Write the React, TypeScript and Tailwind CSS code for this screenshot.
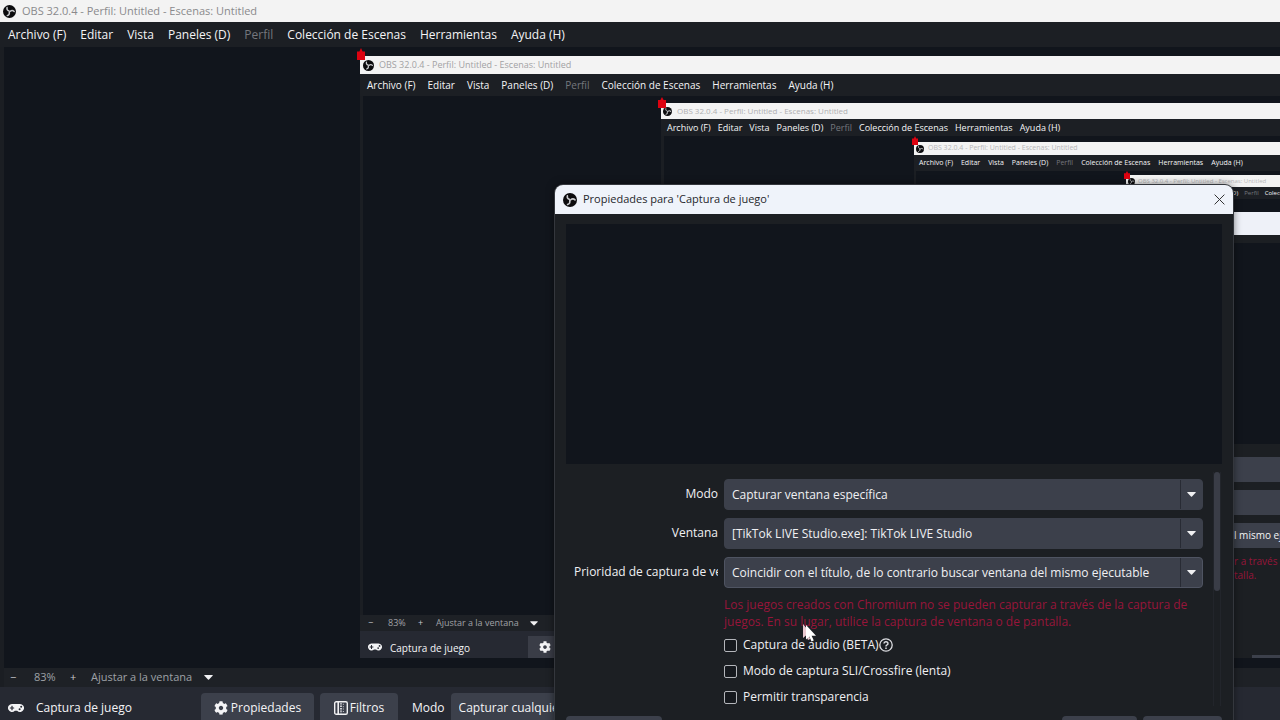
import React from 'react';
import { FaGamepad, FaCog } from 'react-icons/fa';

interface MirrorLevel {
  frame: string;
  titleBar: string;
  logo: string;
  titleText: string;
  menu: string;
  canvas: string;
  handle: string;
}

const menuItems = [
  'Archivo (F)',
  'Editar',
  'Vista',
  'Paneles (D)',
  'Perfil',
  'Colección de Escenas',
  'Herramientas',
  'Ayuda (H)'
];

const windowTitle = 'OBS 32.0.4 - Perfil: Untitled - Escenas: Untitled';

// Each level is the same window, captured again inside the previous one
const mirrorLevels: MirrorLevel[] = [
  {
    frame: 'left-[356px] top-[9px] bottom-[10px]',
    titleBar: 'h-[18px] gap-[5px] pl-[3px]',
    logo: 'size-[11px]',
    titleText: 'text-[9px] text-[#a2a2a4]',
    menu: 'h-[22px] pl-[7px] gap-3 text-[10px]',
    canvas: 'ml-[3px]',
    handle: 'h-3 w-2 -left-[3px] -top-2'
  },
  {
    frame: 'left-[298px] top-[7px] bottom-0',
    titleBar: 'h-[16px] gap-[5px] pl-[2px]',
    logo: 'size-[9px]',
    titleText: 'text-[8px] text-[#b0b0b2]',
    menu: 'h-[17px] pl-[6px] gap-[7px] text-[9px]',
    canvas: 'ml-[3px]',
    handle: 'h-[11px] w-2 -left-[3px] -top-1.5'
  },
  {
    frame: 'left-[250px] top-[6px] bottom-0',
    titleBar: 'h-[13px] gap-1 pl-[2px]',
    logo: 'size-[8px]',
    titleText: 'text-[7px] text-[#b8b8ba]',
    menu: 'h-[16px] pl-[5px] gap-2 text-[7px]',
    canvas: 'ml-[2px]',
    handle: 'h-[9px] w-1.5 -left-[2px] -top-1.5'
  },
  {
    frame: 'left-[210px] top-[4px] bottom-0',
    titleBar: 'h-[12px] gap-[3px] pl-[2px]',
    logo: 'size-[7px]',
    titleText: 'text-[6px] text-[#b8b8ba]',
    menu: 'h-[12px] pl-[4px] gap-[6px] text-[6px]',
    canvas: 'ml-[2px]',
    handle: 'h-2 w-1.5 -left-[2px] -top-1'
  }
];

const ObsLogo: React.FC<{ className: string }> = ({ className }) => (
  <svg viewBox="0 0 24 24" className={`shrink-0 ${className}`}>
    <circle cx="12" cy="12" r="12" fill="#0c0c0e" />
    <g fill="none" stroke="#c9cacd" strokeWidth="2.6" strokeLinecap="round">
      <path d="M11.500 11.300C8.200 10.200 6.700 7.600 7.500 4.600" />
      <path d="M11.500 11.300C8.200 10.200 6.700 7.600 7.500 4.600" transform="rotate(120 12 12)" />
      <path d="M11.500 11.300C8.200 10.200 6.700 7.600 7.500 4.600" transform="rotate(240 12 12)" />
    </g>
  </svg>
);

const MenuBar: React.FC<{ className: string }> = ({ className }) => (
  <nav className={`flex shrink-0 items-center whitespace-nowrap bg-[#1c1f24] text-[#f4f4f6] ${className}`}>
    {menuItems.map((item) => (
      <button key={item} disabled={item === 'Perfil'} className="disabled:text-[#75777d]">
        {item}
      </button>
    ))}
  </nav>
);

const CaretDown: React.FC<{ className: string }> = ({ className }) => (
  <svg viewBox="0 0 9 5" className={className} fill="#f1f1f3">
    <path d="M.6 0h7.8q.6.2.2.8L5 4.6q-.5.5-1 0L.4.8Q0 .2.6 0z" />
  </svg>
);

const SourceHandle: React.FC<{ className: string }> = ({ className }) => (
  <svg viewBox="0 0 8 12" className={`absolute z-10 ${className}`} preserveAspectRatio="none">
    <path d="M4 0l1.600 3.400H8V12H0V3.400h2.400z" fill="#dc0210" />
  </svg>
);

const FilterIcon: React.FC = () => (
  <svg viewBox="0 0 14 14" className="size-3.5" fill="none" stroke="#f1f1f3">
    <rect x=".7" y=".7" width="12.6" height="12.6" rx="1.6" strokeWidth="1.4" />
    <path d="M4.2 1v12" strokeWidth="1.6" />
    <path d="M7 2.2v10" strokeWidth="1.6" strokeDasharray="1.4 1" />
    <path d="M9.4 2.8v9" strokeWidth="1.2" strokeDasharray="1 1.4" opacity=".7" />
  </svg>
);

const MirrorWindow: React.FC<{ depth: number }> = ({ depth }) => {
  const level = mirrorLevels[depth];
  if (!level) return null;

  return (
    <section className={`absolute right-0 flex flex-col bg-[#1b1e23] ${level.frame}`}>
      <SourceHandle className={level.handle} />
      <div className={`flex shrink-0 items-center whitespace-nowrap bg-[#f3f3f3] ${level.titleBar}`}>
        <ObsLogo className={level.logo} />
        <span className={level.titleText}>{windowTitle}</span>
      </div>
      <MenuBar className={level.menu} />
      <div className={`relative min-h-0 flex-1 overflow-clip bg-[#11151c] ${level.canvas} [overflow-clip-margin:10px]`}>
        <MirrorWindow depth={depth + 1} />
      </div>
      {depth === 0 && (
        <>
          <div className="flex h-4 shrink-0 items-center bg-[#1e2126] pl-2 text-[9px] text-[#a0a2a7]">
            <span className="w-5 text-[#c8c9cd]">−</span>
            <span className="w-[30px]">83%</span>
            <span className="w-[18px] text-[#c8c9cd]">+</span>
            <span className="w-[94px]">Ajustar a la ventana</span>
            <CaretDown className="h-[5px] w-2" />
          </div>
          <div className="flex h-[27px] shrink-0 items-end bg-[#262932] text-[10px] text-[#f4f4f6]">
            <FaGamepad className="mx-2 mb-1 size-3.5 shrink-0" />
            <span className="w-[138px] pb-0.5">Captura de juego</span>
            <button className="flex h-[22px] w-24 items-center bg-[#3a3d47] pl-[11px]">
              <FaCog className="size-3" />
            </button>
          </div>
        </>
      )}
    </section>
  );
};

// Right edge of the captured dialog, the rest stays behind the real one
const MirrorDialog: React.FC = () => (
  <div className="absolute bottom-[10px] left-[1228px] right-0 top-[165px] flex flex-col overflow-hidden whitespace-nowrap bg-[#1c1f23] text-[10px]">
    <div className="h-[23px] shrink-0 bg-[#eef1f8]" />
    <div className="mt-2 h-[201px] shrink-0 bg-[#11151c]" />
    <div className="mt-[13px] flex shrink-0 flex-col gap-2 text-[#f4f4f6]">
      <div className="h-[25px] bg-[#3c404b]" />
      <div className="h-[25px] bg-[#3c404b]" />
      <div className="flex h-[25px] items-center bg-[#3c404b] pl-0.5">l mismo ejecutable</div>
    </div>
    <p className="mt-1.5 shrink-0 pl-0.5 leading-[14px] text-[#97153a]">
      r a través de la captura
      <br />
      talla.
    </p>
    <div className="ml-5 mt-auto h-[3px] shrink-0 bg-[#3c404b]" />
  </div>
);

const ComboBox: React.FC<{ id: string; label: string; value: string; focused?: boolean }> = ({
  id,
  label,
  value,
  focused
}) => (
  <div className="flex items-center gap-1.5">
    <label htmlFor={id} className="w-36 shrink-0 overflow-hidden whitespace-nowrap pb-0.5 text-right">
      {label}
    </label>
    <div
      className={`relative flex h-[31px] flex-1 items-center rounded border bg-[#3c404b] ${
        focused ? 'border-[#4f5462]' : 'border-[#3c404b]'
      }`}
    >
      <select id={id} className="h-full w-full appearance-none rounded bg-transparent pl-[7px] pr-7 outline-none">
        <option>{value}</option>
      </select>
      <span className="pointer-events-none absolute inset-y-0 right-0 flex w-[22px] items-center justify-center border-l border-[#282b34]">
        <CaretDown className="h-[5px] w-[9px]" />
      </span>
    </div>
  </div>
);

const CheckRow: React.FC<{ label: string; children?: React.ReactNode }> = ({ label, children }) => (
  <label className="flex h-[26px] items-center">
    <input
      type="checkbox"
      className="mr-1.5 size-[13px] appearance-none rounded-[2px] border border-[#b4b6bb] bg-[#16191e]"
    />
    {label}
    {children}
  </label>
);

const PropertiesDialog: React.FC = () => (
  <div
    role="dialog"
    aria-labelledby="titulo-propiedades"
    className="absolute left-[555px] top-[185px] flex w-[678px] flex-col rounded-t-lg bg-[#1c1f23] text-[12px] text-[#f0f0f3] shadow-[0_0_8px_rgba(0,0,0,0.6)] ring-1 ring-[#34373d]"
  >
    <header className="flex h-[29px] items-center rounded-t-lg bg-[#eff3fa] px-2">
      <ObsLogo className="size-3.5" />
      <h2 id="titulo-propiedades" className="ml-1.5 flex-1 text-[11px] text-[#26272b]">
        Propiedades para 'Captura de juego'
      </h2>
      <button aria-label="Cerrar" className="text-[#333]">
        <svg viewBox="0 0 11 11" className="size-[11px]" stroke="currentColor" fill="none">
          <path d="M.6.6l9.8 9.8M10.4.6L.6 10.4" />
        </svg>
      </button>
    </header>

    <div className="mx-[11px] mt-2.5 h-60 bg-[#11151c]" />

    <div className="mx-[11px] flex h-[242px] pt-2">
      <form className="flex flex-1 flex-col gap-2 pl-2 pt-[7px]">
        <ComboBox id="modo" label="Modo" value="Capturar ventana específica" />
        <ComboBox id="ventana" label="Ventana" value="[TikTok LIVE Studio.exe]: TikTok LIVE Studio" />
        <ComboBox
          id="prioridad"
          label="Prioridad de captura de ventana"
          value="Coincidir con el título, de lo contrario buscar ventana del mismo ejecutable"
          focused
        />
        <div className="pl-[150px]">
          <p className="mb-0.5 leading-[17px] text-[#97153a]">
            Los juegos creados con Chromium no se pueden capturar a través de la captura de juegos. En su lugar,
            utilice la captura de ventana o de pantalla.
          </p>
          <CheckRow label="Captura de audio (BETA)">
            <svg viewBox="0 0 14 14" className="size-3.5" fill="none" stroke="#dcdde1" strokeWidth="1.3">
              <circle cx="7" cy="7" r="6.2" />
              <path d="M5 5.4a2 1.8 0 1 1 2.8 1.7q-.8.4-.8 1.300M7 9.600v1.400" strokeWidth="1.5" />
            </svg>
          </CheckRow>
          <CheckRow label="Modo de captura SLI/Crossfire (lenta)" />
          <CheckRow label="Permitir transparencia" />
        </div>
      </form>
      <div className="ml-2.5 mr-px w-2 border-x border-[#22252b]">
        <div className="h-[119px] rounded-sm bg-[#3a3d47]" />
      </div>
    </div>

    <footer className="mx-[11px] mt-2.5 flex h-8 gap-1.5">
      <div className="mr-auto w-24 rounded bg-[#3c404b]" />
      <div className="w-[75px] rounded bg-[#3c404b]" />
      <div className="w-[79px] rounded bg-[#3c404b]" />
    </footer>
  </div>
);

const App: React.FC = () => {
  return (
    <div className="relative flex h-screen flex-col overflow-hidden bg-[#1b1e23] font-['Open_Sans','Noto_Sans',sans-serif]">
      {/* Title bar */}
      <header className="flex h-[22px] shrink-0 items-center gap-1.5 bg-[#f3f3f3] pl-[3px]">
        <ObsLogo className="size-[13px]" />
        <h1 className="text-[11px] text-[#8a8a8c]">{windowTitle}</h1>
      </header>

      <MenuBar className="h-[25px] pl-2 gap-3.5 text-[12px]" />

      {/* Preview */}
      <main className="relative ml-1 min-h-0 flex-1 bg-[#11151c]">
        <MirrorWindow depth={0} />
        <MirrorDialog />
      </main>

      {/* Zoom controls */}
      <div className="ml-1 flex h-[19px] shrink-0 items-center bg-[#1e2126] pl-1.5 text-[11px] text-[#9fa1a6]">
        <button aria-label="Alejar" className="w-6 text-left text-[#c8c9cd]">−</button>
        <span className="w-9">83%</span>
        <button aria-label="Acercar" className="w-[21px] text-left text-[#c8c9cd]">+</button>
        <button className="flex items-center gap-3">
          Ajustar a la ventana
          <CaretDown className="h-[5px] w-[9px]" />
        </button>
      </div>

      {/* Source toolbar */}
      <div className="flex h-[33px] shrink-0 items-start overflow-hidden bg-[#262932] pt-1.5 text-[12px] text-[#f4f4f6]">
        <div className="flex h-[30px] w-[201px] shrink-0 items-center gap-3 pl-2">
          <FaGamepad className="size-4" />
          Captura de juego
        </div>
        <button className="mr-1.5 flex h-[30px] w-[113px] shrink-0 items-center justify-center gap-[3px] rounded bg-[#3c404b]">
          <FaCog className="size-3.5" />
          Propiedades
        </button>
        <button className="flex h-[30px] w-[78px] shrink-0 items-center justify-center gap-0.5 rounded bg-[#3c404b]">
          <FilterIcon />
          Filtros
        </button>
        <label htmlFor="modo-captura" className="ml-3.5 mr-1.5 flex h-[30px] items-center">
          Modo
        </label>
        <select id="modo-captura" className="h-[30px] w-64 appearance-none rounded bg-[#3c404b] pl-2">
          <option>Capturar cualquier aplicación</option>
        </select>
      </div>

      <PropertiesDialog />

      {/* Mouse pointer with its trail */}
      <svg viewBox="0 0 16 18" className="pointer-events-none absolute left-[803px] top-[624px] h-[18px] w-4">
        <path d="M0 0v14l3-2.500 2 4.500 2.200-1-2-4.300H9z" fill="#e9c9d0" />
        <path d="M3 1v14.500l3.300-3 2.200 5 2.300-1.100-2.200-4.600H13z" fill="#fff" />
      </svg>
    </div>
  );
};

export default App;
